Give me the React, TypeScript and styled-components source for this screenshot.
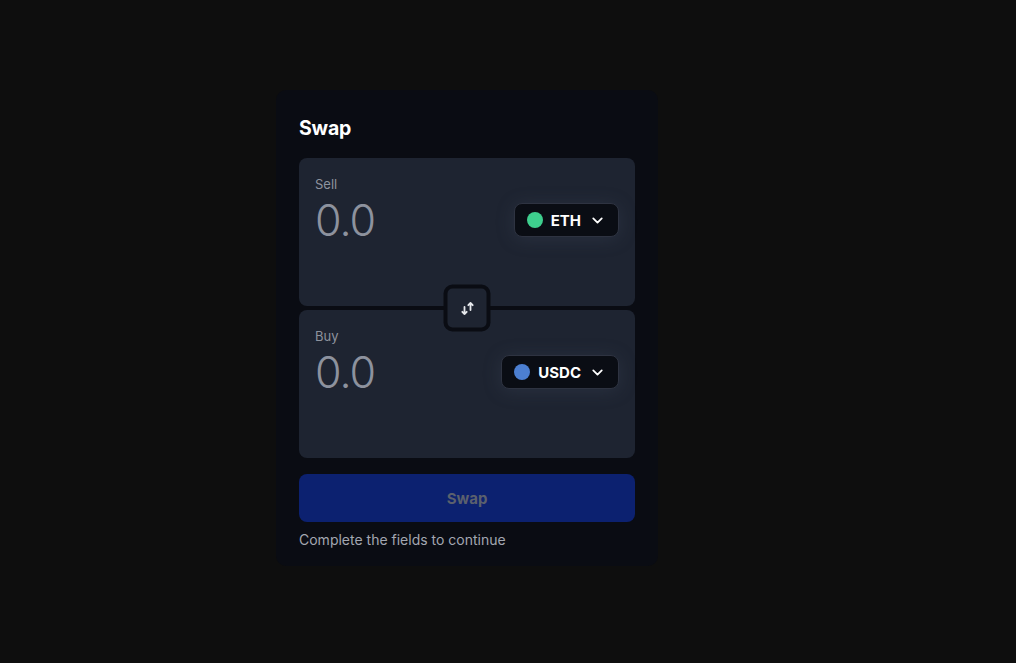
import React from "react";
import styled, { createGlobalStyle } from "styled-components";
import { ChevronDown } from "lucide-react";

const GlobalStyle = createGlobalStyle`
  html, body {
    margin: 0;
    padding: 0;
    background: #0e0e0e;
    font-family: Inter, "Noto Sans", sans-serif;
  }
`;

const Page = styled.div`
  min-height: 663px;
  padding: 90px 0 0 276px;
  box-sizing: border-box;
`;

const Card = styled.div`
  width: 382px;
  box-sizing: border-box;
  background: #0a0c13;
  border-radius: 10px;
  padding: 24px 23px 16px;
`;

const Title = styled.h1`
  margin: 0 0 16px;
  font-size: 19.5px;
  line-height: 28px;
  font-weight: 700;
  color: #ffffff;
  letter-spacing: -0.2px;
`;

const Panels = styled.div`
  position: relative;
  display: flex;
  flex-direction: column;
  gap: 4px;
`;

const Panel = styled.div`
  height: 148px;
  box-sizing: border-box;
  background: #1e2431;
  border-radius: 8px;
  padding: 16px;
`;

const Label = styled.div`
  font-size: 13px;
  line-height: 20px;
  color: #8e939e;
`;

const Row = styled.div`
  margin-top: 8px;
  height: 36px;
  display: flex;
  align-items: center;
  justify-content: space-between;
`;

const Amount = styled.div`
  font-size: 43px;
  line-height: 36px;
  font-weight: 300;
  color: #8d929e;
  letter-spacing: -1px;
`;

const TokenButton = styled.button`
  display: flex;
  align-items: center;
  gap: 8px;
  height: 34px;
  box-sizing: border-box;
  padding: 0 12px;
  background: #0a0d14;
  border: 1px solid #2e3341;
  border-radius: 8px;
  color: #ffffff;
  font-family: inherit;
  font-size: 15px;
  font-weight: 700;
  box-shadow: 0 2px 18px rgba(70, 80, 100, 0.3);
  cursor: pointer;
`;

const Dot = styled.span<{ $color: string }>`
  width: 16px;
  height: 16px;
  border-radius: 50%;
  background: ${(p) => p.$color};
`;

const FlipButton = styled.button`
  position: absolute;
  left: 50%;
  top: 50%;
  transform: translate(-50%, -50%);
  width: 47px;
  height: 47px;
  box-sizing: border-box;
  border: 4px solid #0a0c13;
  border-radius: 9px;
  background: #1e2431;
  color: #e6e8ec;
  display: flex;
  align-items: center;
  justify-content: center;
  padding: 0;
  cursor: pointer;
`;

const SwapButton = styled.button`
  margin-top: 16px;
  width: 100%;
  height: 48px;
  border: none;
  border-radius: 8px;
  background: #0c2170;
  color: #5b606d;
  font-family: inherit;
  font-size: 15px;
  font-weight: 700;
`;

const Hint = styled.div`
  margin-top: 8px;
  font-size: 14px;
  line-height: 20px;
  color: #a3a7b1;
`;

const tokens = [
  { label: "Sell", symbol: "ETH", color: "#3ecf8e" },
  { label: "Buy", symbol: "USDC", color: "#4c7fd1" },
];

const FlipIcon = () => (
  <svg width="14" height="14" viewBox="0 0 14 14" fill="none" stroke="currentColor" strokeWidth="1.8" strokeLinecap="round" strokeLinejoin="round">
    <path d="M4 5.5v7M1.8 10.3 4 12.5l2.2-2.2" />
    <path d="M10 8.5v-7M7.8 3.7 10 1.5l2.2 2.2" />
  </svg>
);

export default function App() {
  return (
    <Page>
      <GlobalStyle />
      <Card>
        <Title>Swap</Title>
        <Panels>
          {tokens.map((t) => (
            <Panel key={t.label}>
              <Label>{t.label}</Label>
              <Row>
                <Amount>0.0</Amount>
                <TokenButton>
                  <Dot $color={t.color} />
                  {t.symbol}
                  <ChevronDown size={17} strokeWidth={2.5} />
                </TokenButton>
              </Row>
            </Panel>
          ))}
          <FlipButton>
            <FlipIcon />
          </FlipButton>
        </Panels>
        <SwapButton>Swap</SwapButton>
        <Hint>Complete the fields to continue</Hint>
      </Card>
    </Page>
  );
}
